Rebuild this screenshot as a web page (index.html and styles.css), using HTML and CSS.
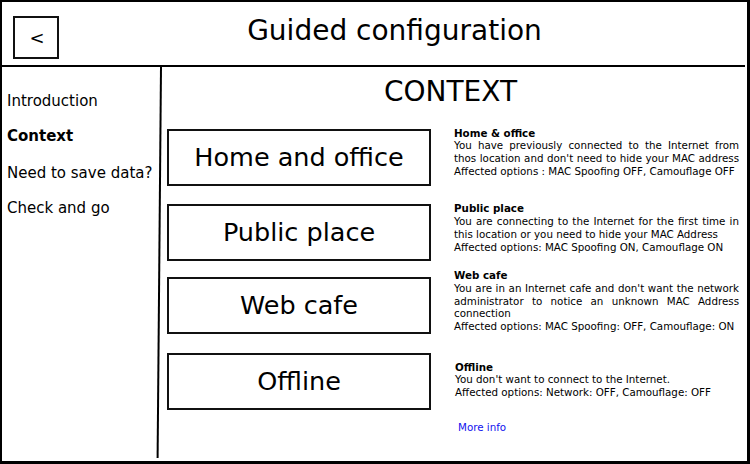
FILE: index.html
```html
<!DOCTYPE html>
<html lang="en">
<head>
    <meta charset="UTF-8">
    <meta name="viewport" content="width=device-width, initial-scale=1.0">
    <link rel="stylesheet" href="styles.css">
    <title>Guided configuration</title>
</head>
<body>
    <div class="frame">
        <header class="header">
            <button class="back-btn">&lt;</button>
            <h1 class="title">Guided configuration</h1>
        </header>
        <div class="body">
            <nav class="sidebar">
                <div class="step">Introduction</div>
                <div class="step active">Context</div>
                <div class="step">Need to save data?</div>
                <div class="step">Check and go</div>
            </nav>
            <main class="main">
                <h2 class="section-title">CONTEXT</h2>
                <div class="content">
                    <div class="options">
                        <button class="option">Home and office</button>
                        <button class="option">Public place</button>
                        <button class="option cafe-btn">Web cafe</button>
                        <button class="option offline-btn">Offline</button>
                    </div>
                    <div class="details">
                        <div class="detail home">
                            <div class="detail-title">Home &amp; office</div>
                            <span class="line fill">You have previously connected to the Internet from</span>
                            <span class="line fill">thos location and don't need to hide your MAC address</span>
                            <span class="line">Affected options : MAC Spoofing OFF, Camouflage OFF</span>
                        </div>
                        <div class="detail public">
                            <div class="detail-title">Public place</div>
                            <span class="line fill">You are connecting to the Internet for the first time in</span>
                            <span class="line">this location or you need to hide your MAC Address</span>
                            <span class="line">Affected options: MAC Spoofing ON, Camouflage ON</span>
                        </div>
                        <div class="detail cafe">
                            <div class="detail-title">Web cafe</div>
                            <span class="line fill">You are in an Internet cafe and don't want the network</span>
                            <span class="line fill">administrator to notice an unknown MAC Address</span>
                            <span class="line">connection</span>
                            <span class="line">Affected options: MAC Spoofing: OFF, Camouflage: ON</span>
                        </div>
                        <div class="detail offline">
                            <div class="detail-title">Offline</div>
                            <span class="line">You don't want to connect to the Internet.</span>
                            <span class="line">Affected options: Network: OFF, Camouflage: OFF</span>
                        </div>
                        <a class="more-info" href="#">More info</a>
                    </div>
                </div>
            </main>
        </div>
    </div>
</body>
</html>
```

FILE: styles.css
```css
* {
    box-sizing: border-box;
}

body {
    margin: 0;
    background: #fff;
    color: #000;
    font-family: 'DejaVu Sans', Verdana, sans-serif;
}

.frame {
    width: 750px;
    height: 464px;
    border: 2px solid #000;
    border-right-width: 3px;
    border-bottom-width: 3px;
    display: flex;
    flex-direction: column;
}

/* header */
.header {
    height: 65px;
    margin-right: 2px;
    border-bottom: 2px solid #000;
    display: flex;
    align-items: flex-start;
    flex-shrink: 0;
}

.back-btn {
    width: 46px;
    height: 43px;
    margin: 14px 0 0 11px;
    padding: 0 0 1px 2px;
    border: 2px solid #111;
    background: #fff;
    font-family: inherit;
    font-size: 18px;
    color: #000;
}

.title {
    flex: 1;
    margin: 0;
    padding: 12px 15px 0 0;
    font-size: 28px;
    font-weight: normal;
    text-align: center;
}

.body {
    flex: 1;
    display: flex;
}

/* sidebar */
.sidebar {
    width: 160px;
    padding: 25px 0 0 5px;
    display: flex;
    flex-direction: column;
    gap: 17px;
    position: relative;
    flex-shrink: 0;
}

.sidebar::after {
    content: '';
    position: absolute;
    top: 0;
    right: 0;
    bottom: 3px;
    width: 2px;
    background: #000;
    transform-origin: top;
    transform: rotate(0.5deg);
}

.step {
    font-size: 15px;
    line-height: 18px;
}

.step.active {
    font-weight: bold;
    margin-bottom: 2px;
}

/* main */
.main {
    flex: 1;
    padding-left: 5px;
}

.section-title {
    margin: 9px 0 0;
    padding-right: 13px;
    font-size: 28px;
    line-height: 32px;
    font-weight: normal;
    text-align: center;
}

.content {
    display: flex;
    margin-top: 21px;
}

.options {
    display: flex;
    flex-direction: column;
    gap: 18px;
}

.option {
    width: 264px;
    height: 57px;
    border: 2px solid #111;
    background: #fff;
    font-family: inherit;
    font-size: 25.5px;
    color: #000;
    padding: 0 0 2px;
}

.cafe-btn { margin-top: -2px; }
.offline-btn { margin-top: 1px; }

.details {
    width: 285px;
    margin-left: 23px;
    margin-top: -2.4px;
    display: flex;
    flex-direction: column;
    align-items: flex-start;
    font-size: 10.3px;
    line-height: 12.7px;
}

.detail {
    width: 100%;
}

.detail-title {
    font-weight: bold;
}

.line {
    display: block;
    white-space: nowrap;
}

.line.fill {
    text-align: justify;
    text-align-last: justify;
}

.public { margin-top: 25px; }
.cafe { margin-top: 16px; }
.offline { margin-top: 28px; padding-left: 1px; }

.more-info {
    margin: 22px 0 0 4px;
    color: #1111ee;
    text-decoration: none;
}
```
